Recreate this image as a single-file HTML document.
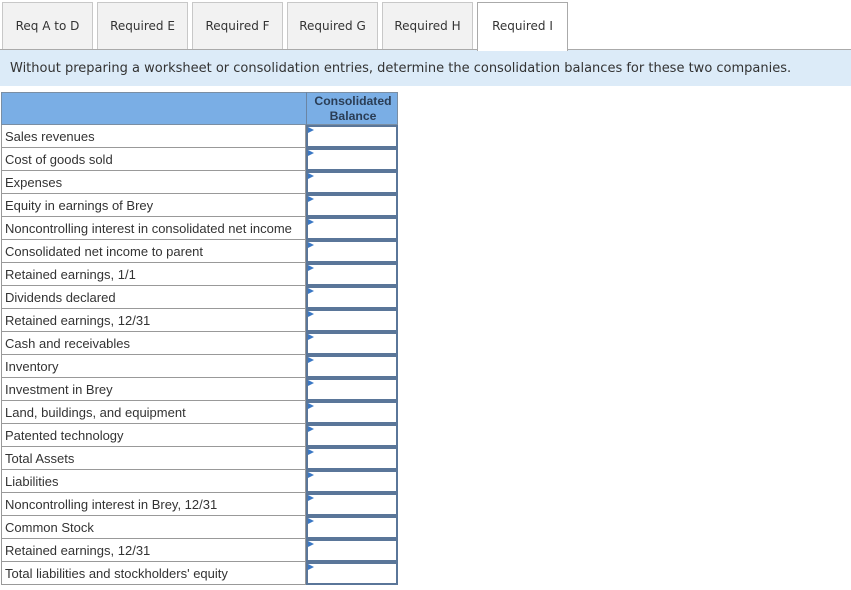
<!DOCTYPE html>
<html><head><style>
body{margin:0;width:851px;height:590px;background:#fff;position:relative;font-family:"Liberation Sans",Arial,sans-serif;overflow:hidden}
.tab{position:absolute;top:2px;width:91px;background:#f2f2f2;border:1px solid #c8c8c8;border-bottom:none;font-family:"DejaVu Sans",Verdana,sans-serif;font-size:12px;color:#333;text-align:center;line-height:47px;box-sizing:border-box;height:47px}
.tab.act{background:#fff;border-color:#aaa;height:49px;z-index:2}
.band{position:absolute;top:49px;left:0;width:851px;height:37px;background:#dcebf8;border-top:1px solid #aaa;box-sizing:border-box;font-family:"DejaVu Sans",Verdana,sans-serif;font-size:13px;color:#333;line-height:37px;padding-left:10px;white-space:nowrap}
.hdr{position:absolute;top:92px;left:1px;width:397px;height:33px;background:#7aaee5;border:1px solid #7a8ea3;box-sizing:border-box}
.hdr .c{position:absolute;left:304px;top:-1px;width:93px;height:33px;border-left:1px solid #6b85a3;text-align:center;font-size:12.2px;font-weight:bold;color:#2a3d55;line-height:15px;padding-top:2px;box-sizing:border-box}
.row{position:absolute;left:1px;width:305px;height:23px;border:1px solid #999;border-top:none;box-sizing:border-box;font-size:13px;color:#333;line-height:23px;padding-left:3px;white-space:nowrap}
.in{position:absolute;left:306px;width:92px;height:23px;border:2px solid #5a7699;box-sizing:border-box;background:#fff}
.in:before{content:"";position:absolute;left:0;top:0;border-left:6px solid #3b78c4;border-top:3px solid transparent;border-bottom:3px solid transparent}
</style></head><body>
<div class="tab" style="left:2px">Req A to D</div>
<div class="tab" style="left:97px">Required E</div>
<div class="tab" style="left:192px">Required F</div>
<div class="tab" style="left:287px">Required G</div>
<div class="tab" style="left:382px">Required H</div>
<div class="tab act" style="left:477px">Required I</div>
<div class="band">Without preparing a worksheet or consolidation entries, determine the consolidation balances for these two companies.</div>
<div class="hdr"><div class="c">Consolidated<br>Balance</div></div>
<div id="t"></div>
<script>
var L=["Sales revenues","Cost of goods sold","Expenses","Equity in earnings of Brey","Noncontrolling interest in consolidated net income","Consolidated net income to parent","Retained earnings, 1/1","Dividends declared","Retained earnings, 12/31","Cash and receivables","Inventory","Investment in Brey","Land, buildings, and equipment","Patented technology","Total Assets","Liabilities","Noncontrolling interest in Brey, 12/31","Common Stock","Retained earnings, 12/31","Total liabilities and stockholders' equity"];
var h="";for(var i=0;i<L.length;i++){var y=125+i*23;h+='<div class="row" style="top:'+y+'px">'+L[i]+'</div><div class="in" style="top:'+y+'px"></div>';}
document.getElementById("t").innerHTML=h;
</script>
</body></html>
